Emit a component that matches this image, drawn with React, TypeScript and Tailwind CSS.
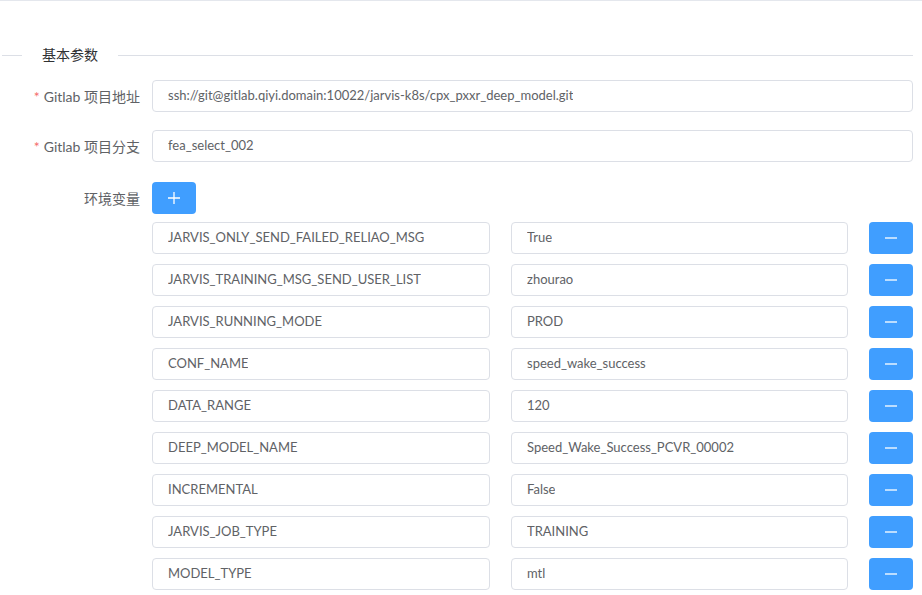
import React from "react";

const envVars = [
  { key: "JARVIS_ONLY_SEND_FAILED_RELIAO_MSG", value: "True" },
  { key: "JARVIS_TRAINING_MSG_SEND_USER_LIST", value: "zhourao" },
  { key: "JARVIS_RUNNING_MODE", value: "PROD" },
  { key: "CONF_NAME", value: "speed_wake_success" },
  { key: "DATA_RANGE", value: "120" },
  { key: "DEEP_MODEL_NAME", value: "Speed_Wake_Success_PCVR_00002" },
  { key: "INCREMENTAL", value: "False" },
  { key: "JARVIS_JOB_TYPE", value: "TRAINING" },
  { key: "MODEL_TYPE", value: "mtl" },
];

const font = { fontFamily: 'Lato, "Noto Sans CJK SC", sans-serif' };

function Field({ value, className = "" }: { value: string; className?: string }) {
  return (
    <div
      className={`h-8 flex items-center px-[15px] border border-[#dcdfe6] rounded text-[13px] text-[#606266] bg-white ${className}`}
    >
      <span className="truncate">{value}</span>
    </div>
  );
}

function FormRow({
  label,
  required,
  children,
  className = "",
}: {
  label: string;
  required?: boolean;
  children: React.ReactNode;
  className?: string;
}) {
  return (
    <div className={`flex items-start ${className}`}>
      <div className="w-[152px] shrink-0 pr-3 h-8 flex items-center justify-end text-[14px] text-[#606266]">
        {required && <span className="text-[#f56c6c] mr-1">*</span>}
        {label}
      </div>
      <div className="flex-1 min-w-0">{children}</div>
    </div>
  );
}

export default function App() {
  return (
    <div className="w-[922px] h-[595px] bg-white border-t border-[#e4e7ed] overflow-hidden" style={font}>
      {/* Divider */}
      <div className="relative mt-[54px] ml-[2px] mr-[9px] h-px bg-[#dcdfe6]">
        <span className="absolute left-5 -top-[10px] px-5 bg-white text-[14px] leading-5 text-[#303133]">
          基本参数
        </span>
      </div>

      <div className="pr-[9px] mt-[24px] flex flex-col gap-[18px]">
        <FormRow label="Gitlab 项目地址" required>
          <Field value="ssh://git@gitlab.qiyi.domain:10022/jarvis-k8s/cpx_pxxr_deep_model.git" />
        </FormRow>
        <FormRow label="Gitlab 项目分支" required>
          <Field value="fea_select_002" />
        </FormRow>
        <FormRow label="环境变量" className="mt-[2px]">
          <button className="w-11 h-8 rounded bg-[#409eff] text-white flex items-center justify-center">
            <svg width="12" height="12" viewBox="0 0 12 12">
              <path d="M6 0v12M0 6h12" stroke="white" strokeWidth="1.3" />
            </svg>
          </button>
          <div className="mt-[8px] flex flex-col gap-[10px]">
            {envVars.map((v) => (
              <div key={v.key} className="flex gap-[21px]">
                <Field value={v.key} className="w-[338px]" />
                <Field value={v.value} className="w-[337px]" />
                <button className="w-11 h-8 rounded bg-[#409eff] flex items-center justify-center">
                  <svg width="12" height="2" viewBox="0 0 12 2">
                    <path d="M0 1h12" stroke="white" strokeWidth="1.3" />
                  </svg>
                </button>
              </div>
            ))}
          </div>
        </FormRow>
      </div>
    </div>
  );
}
